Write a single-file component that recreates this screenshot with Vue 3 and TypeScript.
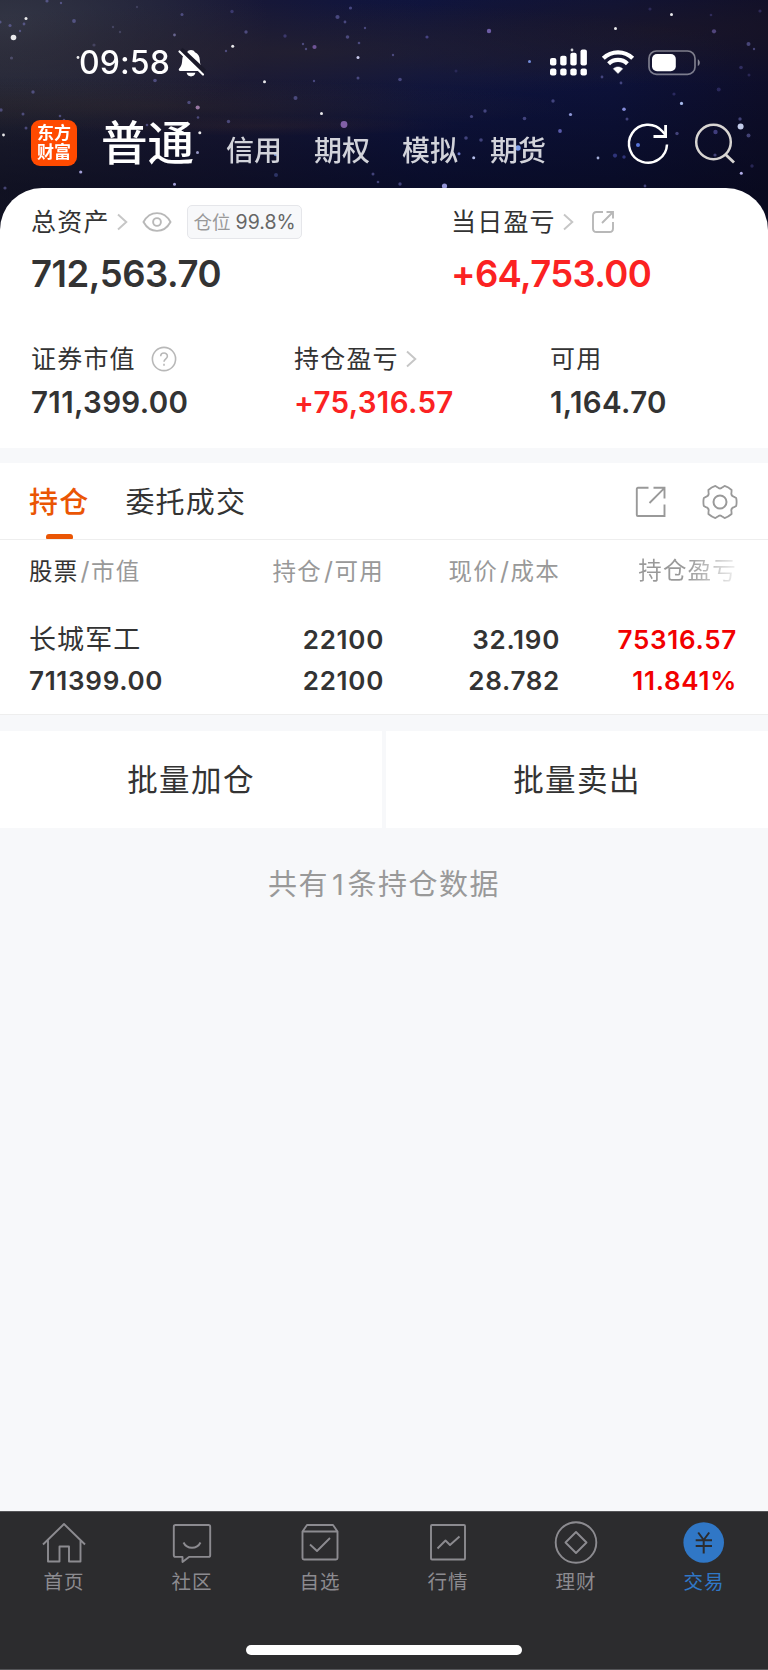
<script setup lang="ts">
interface Star { x: number; y: number; r: number; c: string; o: number }

const star = (x: number, y: number, r: number, c = '#8582d8', o = 0.6): Star => ({ x, y, r, c, o })

const stars: Star[] = [
  star(13.5, 37.5, 2.8, '#ffffff', 1), star(26, 18.5, 1.5, '#ffffff', 1), star(10, 25.5, 1.6), star(0, 22, 1.6),
  star(24, 24, 1.4), star(20, 31, 1.2), star(74, 21, 1.9), star(47, 1, 1.6), star(61, 3, 1.2), star(11.5, 58, 1.6, '#8582b8', 0.5),
  star(113, 27, 1.2, '#8582b8', 0.4), star(120, 32, 1.2, '#8582b8', 0.4), star(182, 14.5, 1.5), star(174.5, 35, 1.4, '#a5a2e0', 0.7),
  star(137, 7, 1.2, '#8582b8', 0.35), star(94, 45, 1.6, '#8582b8', 0.4), star(78, 57.5, 1.4, '#ffffff', 1),
  star(155, 80.5, 1.8), star(33, 92, 1.7), star(1, 110, 1.7), star(23, 114, 1.5), star(3.5, 135, 1.4, '#ffffff', 1),
  star(26, 128, 1.5), star(60, 116, 1.3), star(64, 120, 1.3), star(232, 11.5, 1.7, '#6e68c8', 0.5), star(246, 32, 1.7),
  star(232.7, 46.3, 1.5, '#ffffff', 1), star(226, 51, 1.2), star(285, 36, 1.7, '#6e68c8', 0.5), star(337.5, 17, 2.1),
  star(345, 22, 1.4), star(350.5, 8, 1.6), star(365, 28, 1.2), star(347.5, 37, 1.8), star(358, 57.6, 1.5, '#dcdcff', 1),
  star(314.5, 47, 2.1, '#8e6abe', 0.8), star(303, 44, 1.2), star(306, 49, 1.2), star(359, 43, 1.3), star(264.5, 81.8, 1.5, '#ffffff', 1),
  star(358, 78, 1.5), star(314, 81, 1.2), star(295.5, 98, 2), star(321.5, 113.5, 1.5, '#ffffff', 1), star(344, 124.5, 3.4, '#a277cc', 0.85),
  star(189, 102.5, 1.7), star(197.7, 107.5, 2.1, '#c79ad0', 0.8), star(198, 117.5, 1.3), star(199.8, 132.7, 1.5, '#ffffff', 1),
  star(147, 125, 1.3), star(228.5, 121.5, 1.7), star(197.5, 152.5, 1.5, '#c8c8ff', 0.8), star(80.7, 172, 1.6, '#c4c0ff', 0.9),
  star(174.5, 184.3, 1.5, '#c4c0ff', 0.9), star(276, 154, 2.3, '#83a5f0', 0.9), star(276, 175, 2, '#5360b0', 0.6),
  star(373, 174, 1.5), star(378, 182, 1.3), star(5, 188, 1.6), star(427, 37, 1.6, '#6e68c8', 0.7), star(489, 31, 2.2, '#8873c8', 0.85),
  star(393, 55, 1.2), star(529.5, 61.5, 1.5, '#87a6ff', 0.9), star(615.5, 28.5, 1.5, '#ffffff', 1), star(671.5, 14.5, 1.5, '#ffffff', 1),
  star(650, 9, 1.6, '#6e68c8', 0.35), star(711, 15, 1.3, '#6e68c8', 0.4), star(760, 11, 1.6, '#6e68c8', 0.4), star(714, 31.3, 2.1, '#8873c8', 0.7),
  star(748.5, 44, 2), star(754, 49, 1.2), star(741, 67.5, 1.8, '#6e68c8', 0.45), star(749, 75, 1.5, '#6e68c8', 0.35),
  star(572, 50, 1.4, '#ffffff', 0.9), star(400, 79.5, 1.8), star(456, 71, 1.5, '#5450a0', 0.4), star(602, 77, 1.4), star(621, 83, 1.4),
  star(718.7, 89.5, 2, '#6e68c8', 0.4), star(674, 94, 1.6, '#6e68c8', 0.4), star(681.5, 103.4, 1.6, '#b7ccff', 1),
  star(624, 109.3, 1.8, '#a0a8ff', 0.9), star(627, 119, 1.5), star(553, 101, 1.7), star(570.5, 114.5, 1.6, '#aeb7ff', 0.9),
  star(485, 111, 1.7), star(471.5, 116.5, 1.6), star(524.5, 118.5, 1.8), star(560, 131, 1.9, '#7878d8', 0.8), star(466, 138, 1.8),
  star(481, 140, 1.8), star(459, 153.7, 1.5, '#91a0ff', 0.8), star(473.7, 157.7, 1.5, '#c8d2ff', 1), star(518, 148, 2.7, '#8baeff', 1),
  star(598, 158, 1.4, '#c8d2ff', 0.9), star(615, 155.6, 2.1, '#5058c0', 0.7), star(624, 157, 1.7, '#5058c0', 0.7),
  star(638, 145, 2, '#6a8cff', 0.9), star(677, 133.5, 1.7), star(715.5, 132, 2.2, '#6e68c8', 0.7), star(740.6, 126.6, 3, '#d6e0ff', 1),
  star(740, 119, 1.7), star(748.5, 135.5, 2), star(715, 155, 1.6), star(741.3, 173.3, 1.5, '#c4c0ff', 1), star(400, 184, 1.7),
  star(444.5, 186, 2.6, '#b4b4ff', 0.9), star(645, 186, 1.4), star(752, 166, 1.7, '#6e68c8', 0.4),
]

const markets: string[] = ['信用', '期权', '模拟', '期货']

const gearPath = (() => {
  const p = (deg: number, r: number) => {
    const a = (deg * Math.PI) / 180
    return `${(20 + r * Math.cos(a)).toFixed(2)} ${(20 + r * Math.sin(a)).toFixed(2)}`
  }
  let d = ''
  for (let k = 0; k < 6; k++) {
    const a = 60 * k
    d += `${k ? 'L' : 'M'}${p(a - 14, 16.7)}Q${p(a, 17)} ${p(a + 14, 16.7)}L${p(a + 20, 15)}Q${p(a + 30, 12.2)} ${p(a + 40, 15)}`
  }
  return d + 'Z'
})()

interface NavItem { id: string; label: string; active?: boolean }
const nav: NavItem[] = [
  { id: 'home', label: '首页' },
  { id: 'community', label: '社区' },
  { id: 'watch', label: '自选' },
  { id: 'market', label: '行情' },
  { id: 'wealth', label: '理财' },
  { id: 'trade', label: '交易', active: true },
]
</script>

<template>
  <div class="screen">
    <header class="hero">
      <svg class="sky" width="768" height="240" viewBox="0 0 768 240">
        <defs>
          <filter id="soft" x="-5%" y="-5%" width="110%" height="110%"><feGaussianBlur stdDeviation="0.7" /></filter>
        </defs>
        <g filter="url(#soft)">
          <circle v-for="(s, i) in stars" :key="i" :cx="s.x" :cy="s.y" :r="s.r" :fill="s.c" :opacity="s.o < 0.8 ? s.o * 0.75 : s.o * 0.9" />
        </g>
      </svg>
      <div class="status">
        <span class="clock">09:58</span>
        <svg class="bell" width="28" height="30" viewBox="0 0 28 30">
          <path d="M14 2c1.900 0 3.200.9 3.900 2.300 3.200 1.300 4.700 4.100 4.900 7.600.2 4.400 1.100 6.400 3 8.600.9 1.100.6 2.400-.9 2.400H3.200c-1.500 0-1.900-1.300-1-2.400C4.300 18 5 16.300 5.200 11.900c.2-3.500 1.800-6.300 4.900-7.600C10.900 2.900 12.100 2 14 2z" fill="#fff" />
          <path d="M9.600 24.800h8.800c-.4 2.200-2.200 3.600-4.400 3.600s-4-1.400-4.400-3.600z" fill="#fff" />
          <path d="M4 1.500 27.500 23.500" stroke="#1b1a2a" stroke-width="4.600" />
          <path d="M2.500 3.500 26 26.500" stroke="#fff" stroke-width="2.200" stroke-linecap="round" />
        </svg>
        <svg class="signal" width="38" height="28" viewBox="0 0 38 28" fill="#fff">
          <rect x="0" y="9" width="6.400" height="7.500" rx="2" /><rect x="10.200" y="6.700" width="6.400" height="9.800" rx="2" />
          <rect x="20.300" y="3.800" width="6.400" height="12.700" rx="2" /><rect x="30.500" y="0.500" width="6.400" height="16" rx="2" />
          <rect x="0" y="19.500" width="6.400" height="7" rx="2" /><rect x="10.200" y="19.500" width="6.400" height="7" rx="2" />
          <rect x="20.300" y="19.500" width="6.400" height="7" rx="2" /><rect x="30.500" y="19.500" width="6.400" height="7" rx="2" />
        </svg>
        <svg class="wifi" width="34" height="26" viewBox="0 0 34 26" fill="none" stroke="#fff">
          <path d="M2.300 9.300C10.500 1.300 23.500 1.300 31.700 9.300" stroke-width="4.200" />
          <path d="M7.600 14.700c5.200-5 13.600-5 18.800 0" stroke-width="4.200" />
          <path d="M12.300 19.800c2.700-2.500 6.700-2.500 9.400 0L17 24.500z" fill="#fff" stroke-width="0.500" />
        </svg>
        <svg class="battery" width="54" height="26" viewBox="0 0 54 26">
          <rect x="1" y="1" width="46" height="23.400" rx="7.500" fill="none" stroke="#fff" stroke-opacity=".45" stroke-width="1.700" />
          <rect x="4" y="4" width="23.800" height="17.300" rx="5" fill="#fff" />
          <path d="M49.800 9.300v6.800c1.200-.6 2-2 2-3.400s-.8-2.800-2-3.400z" fill="#fff" fill-opacity=".5" />
        </svg>
      </div>
      <div class="accounts">
        <div class="logo"><span>东方</span><span>财富</span></div>
        <h1>普通</h1>
        <nav class="markets"><span v-for="m in markets" :key="m">{{ m }}</span></nav>
        <svg class="refresh" width="44" height="44" viewBox="0 0 44 44" fill="none" stroke="#fff" stroke-width="2.500">
          <path d="M41 22.500a19 19 0 1 1-4.700-13.300L40 13.500" />
          <path d="M39.600 3v11.500H27.500" stroke-width="2.800" />
        </svg>
        <svg class="search" width="44" height="44" viewBox="0 0 44 44" fill="none" stroke="#d8d5d2" stroke-width="2.500">
          <circle cx="20.500" cy="20" r="17.300" /><path d="M32 32l9 8.500" stroke-width="2.900" />
        </svg>
      </div>
    </header>

    <section class="summary">
      <div class="totals">
        <div class="total">
          <div class="label">
            总资产
            <svg class="chev" width="12" height="18" viewBox="0 0 12 18"><path d="M2 1.500 10.300 9 2 16.500" /></svg>
            <svg class="eye" width="30" height="22" viewBox="0 0 30 22"><path d="M1.500 11C8-.8 22-.8 28.500 11 22 22.800 8 22.800 1.500 11z" /><circle cx="15" cy="11" r="3.900" /></svg>
            <span class="chip"><i>仓位</i>99.8%</span>
          </div>
          <strong>712,563.70</strong>
        </div>
        <div class="total day">
          <div class="label">
            当日盈亏
            <svg class="chev" width="12" height="18" viewBox="0 0 12 18"><path d="M2 1.500 10.300 9 2 16.500" /></svg>
            <svg class="share" width="24" height="24" viewBox="0 0 24 24"><path d="M12 2H5.500Q2 2 2 5.500v13Q2 22 5.500 22h13Q22 22 22 18.500V12M11 13 21.500 2.500M15.500 2H22v6.500" /></svg>
          </div>
          <strong class="up">+64,753.00</strong>
        </div>
      </div>
      <div class="metrics">
        <div class="metric">
          <div class="label">
            证券市值
            <svg class="help" width="26" height="26" viewBox="0 0 26 26"><circle cx="13" cy="13" r="11.600" /><path d="M9.700 10.300C9.700 6 16.400 6 16.400 10.200c0 2.500-3.400 2.800-3.400 5.600M13 17.700v2.100" /></svg>
          </div>
          <strong>711,399.00</strong>
        </div>
        <div class="metric">
          <div class="label">
            持仓盈亏
            <svg class="chev" width="12" height="18" viewBox="0 0 12 18"><path d="M2 1.500 10.300 9 2 16.500" /></svg>
          </div>
          <strong class="up">+75,316.57</strong>
        </div>
        <div class="metric">
          <div class="label">可用</div>
          <strong>1,164.70</strong>
        </div>
      </div>
    </section>

    <section class="positions">
      <div class="tabs">
        <span class="tab active">持仓</span>
        <span class="tab">委托成交</span>
        <svg class="export" width="32" height="32" viewBox="0 0 32 32"><path d="M13.500 1.800H3Q1.800 1.800 1.800 3v26q0 1 1 1h26.700V18.500M14.500 17 29.300 2.200M18.500 1.800h11V12.500" /></svg>
        <svg class="gear" width="40" height="40" viewBox="0 0 40 40"><path :d="gearPath" /><circle cx="20" cy="20" r="6.500" stroke-width="2" /></svg>
      </div>
      <div class="grid head">
        <span class="first"><b>股票</b><em>/</em>市值</span>
        <span>持仓<em>/</em>可用</span>
        <span>现价<em>/</em>成本</span>
        <span class="fade">持仓盈亏</span>
      </div>
      <div class="grid row name-row">
        <span class="name">长城军工</span><span>22100</span><span>32.190</span><span class="gain">75316.57</span>
      </div>
      <div class="grid row">
        <span>711399.00</span><span>22100</span><span>28.782</span><span class="gain">11.841%</span>
      </div>
    </section>

    <div class="actions">
      <button>批量加仓</button>
      <button>批量卖出</button>
    </div>
    <p class="count">共有<span>1</span>条持仓数据</p>

    <footer class="bar">
      <div class="items">
        <div v-for="n in nav" :key="n.id" class="item" :class="{ on: n.active }">
          <svg width="46" height="46" viewBox="0 0 46 46">
            <path v-if="n.id === 'home'" d="M2 24.500 23 4l21 20.500M7 20v21.500h11.500V26.500h9.500v15h11.500V20" />
            <template v-else-if="n.id === 'community'">
              <path d="M6.500 5h33q1.700 0 1.700 1.700v28.500q0 1.700-1.700 1.700H20l-6.500 5V36.900h-7q-1.700 0-1.700-1.700V6.700Q4.800 5 6.500 5z" />
              <path d="M14.500 22.500c3.500 7 13.500 7 17 0" />
            </template>
            <template v-else-if="n.id === 'watch'">
              <path d="M5.500 11.500 10 5h26l4.500 6.500V38q0 1.500-1.500 1.500H7q-1.500 0-1.500-1.500zM5.500 11.500h35M13 24.500l7 6.500 13-13" />
            </template>
            <template v-else-if="n.id === 'market'">
              <rect x="6" y="5" width="34" height="34.500" rx="1" />
              <path d="M12.500 28.500l8-8 4.500 4.500 9.500-8.500" />
            </template>
            <template v-else-if="n.id === 'wealth'">
              <circle cx="23" cy="22.500" r="20.300" />
              <path d="M23 12 33.500 22.500 23 33 12.500 22.500z" />
            </template>
            <template v-else>
              <circle cx="22.700" cy="22.500" r="20.300" fill="#3077c6" stroke="none" />
              <path d="M17.200 12.500 22.700 20l5.500-7.500M22.700 20v13.500M14.700 20.200h16.300M14.700 26h16.300" stroke="#2c2c2e" stroke-width="2" />
            </template>
          </svg>
          <span>{{ n.label }}</span>
        </div>
      </div>
      <div class="indicator"></div>
    </footer>
  </div>
</template>

<style>
body { margin: 0; }
</style>

<style scoped>
.screen {
  width: 768px; height: 1670px; overflow: hidden; display: flex; flex-direction: column;
  background: #f7f8fa; color: #333;
  font-family: Inter, "Noto Sans CJK SC", sans-serif;
}
.screen * { box-sizing: border-box; }
svg { display: block; flex: none; overflow: visible; }
.hero {
  position: relative; height: 240px; flex: none; color: #fff;
  background:
    linear-gradient(180deg, transparent 75px, rgba(5, 6, 22, .55) 190px),
    radial-gradient(ellipse 420px 26px at 150px 106px, rgba(62, 50, 44, .4), transparent),
    radial-gradient(ellipse 200px 10px at 260px 126px, rgba(70, 48, 52, .35), transparent),
    radial-gradient(ellipse 440px 50px at 300px 52px, rgba(42, 36, 44, .6), transparent),
    radial-gradient(ellipse 360px 55px at 660px 30px, rgba(32, 24, 34, .6), transparent),
    radial-gradient(ellipse 260px 120px at 10px 25px, rgba(64, 68, 82, .6), transparent),
    linear-gradient(90deg, #1e1f30, #181836 30%, #0e1440 55%, #0d123a 80%, #0e0e2a);
}
.sky { position: absolute; left: 0; top: 0; }
.status { position: relative; box-sizing: border-box; height: 84px; padding: 44px 66px 0 79px; display: flex; align-items: flex-start; }
.clock { font-size: 32px; font-weight: 500; line-height: 38px; width: 93px; letter-spacing: .1px; }
.bell { margin: 4px auto 0 5px; }
.signal { margin: 4.500px 13px 0 0; }
.wifi { margin: 5px 13px 0 0; }
.battery { margin: 5.500px 0 0 0; }
.accounts { position: relative; display: flex; align-items: flex-start; padding: 32px 31px 0 31px; }
.logo {
  width: 46px; height: 46px; border-radius: 9px; background: #ff4a00; margin-top: 4px; padding-top: 3.500px;
  display: flex; flex-direction: column; align-items: center;
  font-size: 17px; font-weight: 700; line-height: 19.500px;
}
h1 { margin: 0 0 0 24px; width: 101px; font-size: 46.500px; font-weight: 500; line-height: 54px; }
.markets { display: flex; gap: 32px; margin-top: 15px; font-size: 28px; font-weight: 500; line-height: 40px; color: #d2d3da; margin-left: 24px; }
.refresh { margin: 5.500px 0 0 auto; }
.search { margin: 5.500px 0 0 23px; }
.summary {
  position: relative; flex: none; height: 260px; margin-top: -52px; padding: 15px 31px 0;
  border-radius: 42px 42px 0 0; background: #fff;
}
.label { display: flex; align-items: center; height: 38px; font-size: 25px; letter-spacing: 1.200px; white-space: nowrap; line-height: 38px; font-weight: 400; }
.chev, .eye, .share, .help { fill: none; stroke: #b8b8b8; stroke-width: 1.900; }
.chev { margin-left: 6.500px; stroke: #c6c6c6; }
.eye { margin-left: 14px; }
.share { margin-left: 17px; }
.help { margin-left: 15.500px; stroke-width: 1.600; }
.chip {
  margin-left: 15px; width: 115px; height: 34px; border: 1.500px solid #e5e6ea; border-radius: 5px; background: #f7f8fa;
  display: flex; align-items: center; justify-content: center; gap: 5px; font-size: 19.500px; letter-spacing: 0; color: #666;
}
.chip i { font-style: normal; color: #999; font-size: 18.500px; }
strong { display: block; font-weight: 600; }
.totals { display: grid; grid-template-columns: 420px 1fr; }
.totals strong { font-size: 36.500px; line-height: 46px; margin-top: 10px; letter-spacing: -.450px; }
.totals .day strong { letter-spacing: -.650px; }
.up { color: #fb2222; }
.metrics { display: grid; grid-template-columns: 263px 256px 1fr; margin-top: 43px; }
.metrics strong { font-size: 29.500px; line-height: 36px; margin-top: 6px; letter-spacing: .350px; }
.positions { flex: none; height: 252px; margin-top: 15px; background: #fff; border-bottom: 1px solid #eee; }
.tabs { height: 77px; display: flex; align-items: center; padding: 0 28px 0 29px; border-bottom: 1px solid #eee; }
.tab { position: relative; height: 76px; font-size: 29px; letter-spacing: 1.200px; line-height: 79px; margin-right: 36px; }
.tab.active { color: #ea5504; font-weight: 500; }
.tab.active::after { content: ""; position: absolute; left: 17px; bottom: 0; width: 27px; height: 5.500px; border-radius: 3px 3px 1px 1px; background: #ea5504; }
.export { margin-left: auto; margin-top: 1px; fill: none; stroke: #999; stroke-width: 1.900; }
.gear { margin-left: 33px; margin-top: 1px; fill: none; stroke: #999; stroke-width: 1.800; stroke-linejoin: round; }
.grid { display: grid; grid-template-columns: 178px 177px 176px 177px; padding-left: 29px; text-align: right; white-space: nowrap; }
.grid > :first-child { text-align: left; }
.head { height: 62px; line-height: 62px; font-size: 23.500px; letter-spacing: 1.200px; color: #999; }
.head b { font-weight: 400; color: #333; }
.head em { font-style: normal; margin: 0 1px 0 2px; font-size: 25px; letter-spacing: .6px; }
.fade { background: linear-gradient(90deg, #999 72%, rgba(153, 153, 153, .15) 100%); background-clip: text; color: transparent; }
.row { height: 41px; line-height: 41px; font-size: 26px; font-weight: 600; letter-spacing: .700px; }
.name-row { margin-top: 16.500px; }
.name { font-size: 27px; letter-spacing: 1.100px; font-weight: 400; }
.gain { color: #f20000; }
.actions { flex: none; display: grid; grid-template-columns: 1fr 1fr; gap: 4px; height: 96px; margin-top: 15.500px; }
button { border: 0; padding: 0; background: #fff; color: #333; font: 400 30.500px/97px Inter, "Noto Sans CJK SC", sans-serif; letter-spacing: 1.400px; }
.count { margin: 34px 0 0; text-align: center; font-size: 29px; letter-spacing: 1.500px; line-height: 47px; color: #999; }
.count span { margin: 0 2px 0 3px; }
.bar { margin-top: auto; height: 159px; flex: none; background: #2c2c2e; border-top: 1px solid #555558; border-bottom: 1px solid #555558; display: flex; flex-direction: column; align-items: center; }
.items { width: 768px; display: grid; grid-template-columns: repeat(6, 1fr); }
.item { display: flex; flex-direction: column; align-items: center; color: #8c8b90; padding-top: 7.500px; }
.item svg { fill: none; stroke: #8c8b90; stroke-width: 1.900; stroke-linejoin: round; }
.item span { font-size: 19.500px; line-height: 28px; letter-spacing: 1px; margin-top: 2.500px; }
.item.on { color: #3077c6; }
.indicator { width: 276px; height: 10px; border-radius: 5px; background: #fff; margin-top: auto; margin-bottom: 14px; }
</style>
